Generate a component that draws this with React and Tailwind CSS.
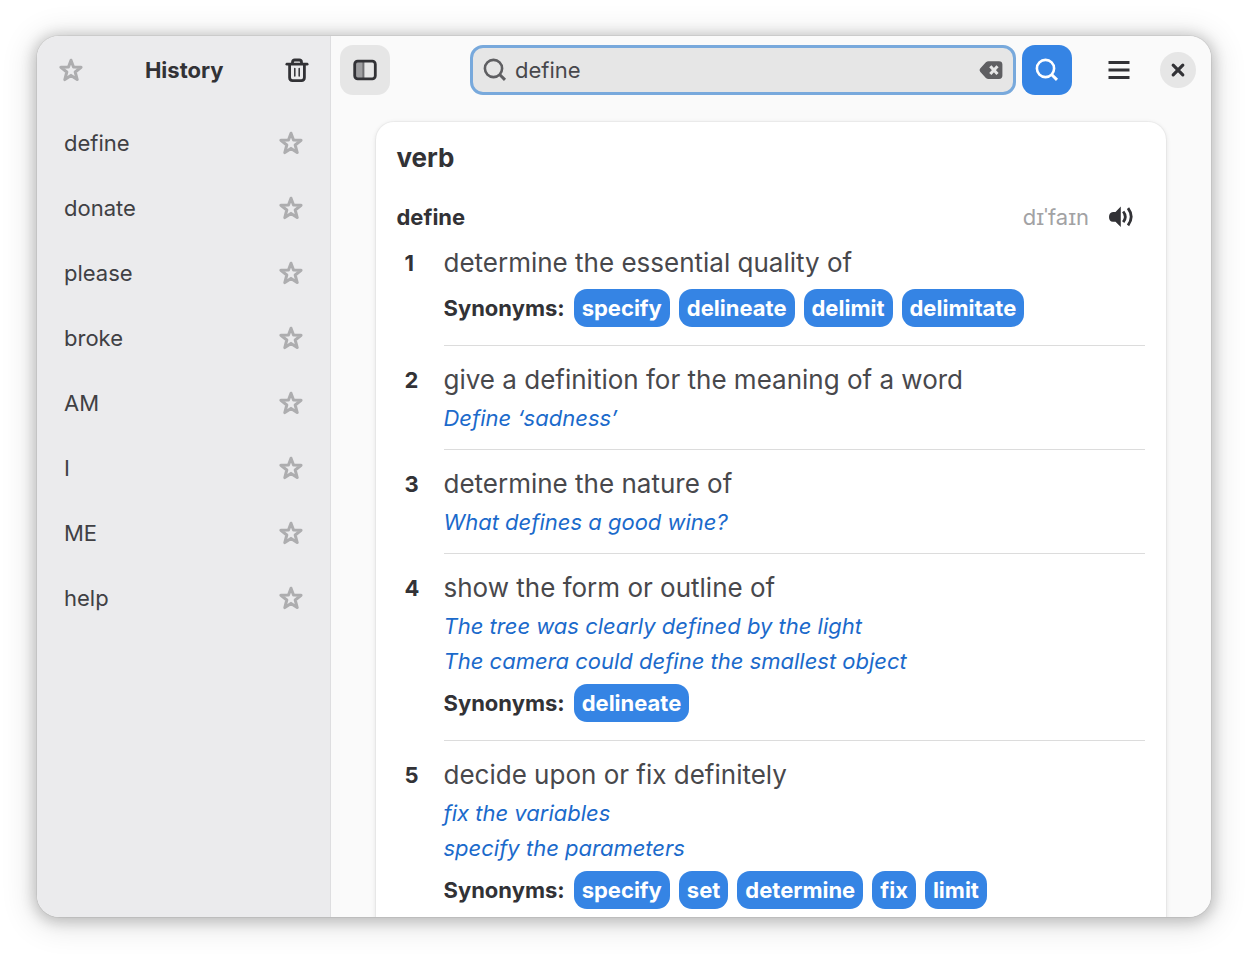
import React, { useState } from 'react';

const HISTORY = ['define', 'donate', 'please', 'broke', 'AM', 'I', 'ME', 'help'];

const DEFINITIONS = [
  {
    text: 'determine the essential quality of',
    examples: [],
    synonyms: ['specify', 'delineate', 'delimit', 'delimitate'],
  },
  {
    text: 'give a definition for the meaning of a word',
    examples: ['Define ‘sadness’'],
    synonyms: [],
  },
  {
    text: 'determine the nature of',
    examples: ['What defines a good wine?'],
    synonyms: [],
  },
  {
    text: 'show the form or outline of',
    examples: ['The tree was clearly defined by the light', 'The camera could define the smallest object'],
    synonyms: ['delineate'],
  },
  {
    text: 'decide upon or fix definitely',
    examples: ['fix the variables', 'specify the parameters'],
    synonyms: ['specify', 'set', 'determine', 'fix', 'limit'],
  },
];

function StarIcon() {
  return (
    <svg viewBox="0 0 24 24" className="size-6" fill="none" stroke="currentColor" strokeWidth="3" strokeLinejoin="round">
      <path d="M12 2.2l2.5 6.8 7.600.3-5.900 4.700 2 7.600-6.200-4.200-6.200 4.200 2-7.600-5.900-4.700 7.600-.3z" />
    </svg>
  );
}

function TrashIcon() {
  return (
    <svg viewBox="0 0 24 24" className="size-6" fill="none" stroke="currentColor" strokeLinecap="round" strokeLinejoin="round">
      <path d="M1.900 6.200h20.200" strokeWidth="2.8" />
      <path d="M7.500 5.500V4.200q0-2.200 2.200-2.200h4.600q2.200 0 2.200 2.200v1.300" strokeWidth="2.8" />
      <path d="M4.600 7v12.600q0 3 3 3h8.800q3 0 3-3V7" strokeWidth="2.8" />
      <path d="M9.800 10.500v7.500M14.200 10.500v7.500" strokeWidth="1.5" />
    </svg>
  );
}

function SidebarIcon() {
  return (
    <svg viewBox="0 0 24 24" className="size-6">
      <path d="M3 4h7v16H3z" fill="currentColor" opacity=".4" />
      <path d="M10.500 4v16" stroke="currentColor" strokeWidth="1.800" opacity=".65" />
      <rect x="1.700" y="3.200" width="20.600" height="17.600" rx="3" fill="none" stroke="currentColor" strokeWidth="2.800" />
    </svg>
  );
}

function SearchIcon() {
  return (
    <svg viewBox="0 0 24 24" className="size-6 shrink-0" fill="none" stroke="currentColor" strokeWidth="2.600">
      <circle cx="10.500" cy="10.500" r="8.600" />
      <path d="M16.600 16.500l5.400 5.400" strokeWidth="3" />
    </svg>
  );
}

function ClearIcon() {
  return (
    <svg viewBox="0 0 24 24" className="size-6">
      <path
        d="M9.500 3.200H20a3.400 3.400 0 0 1 3.400 3.400v11A3.400 3.400 0 0 1 20 21H9.500q-1.500 0-2.600-1.100L1.400 14q-1.600-1.900 0-3.800l5.500-5.900q1.100-1.100 2.600-1.100z"
        fill="currentColor"
      />
      <path d="M11.300 8.200l7.200 7.800M18.500 8.200L11.300 16" stroke="#e6e6e6" strokeWidth="3" />
    </svg>
  );
}

function MenuIcon() {
  return (
    <svg viewBox="0 0 24 24" className="size-6" stroke="currentColor" strokeWidth="3">
      <path d="M1.500 4.500h21M1.500 12h21M1.500 19.500h21" />
    </svg>
  );
}

function CloseIcon() {
  return (
    <svg viewBox="0 0 24 24" className="size-6" stroke="currentColor" strokeWidth="3.200" strokeLinecap="round">
      <path d="M7.200 7.200l9.600 9.600M16.800 7.200l-9.600 9.600" />
    </svg>
  );
}

function SpeakerIcon() {
  return (
    <svg viewBox="0 0 24 24" className="size-6" fill="none" stroke="currentColor" strokeWidth="2.800">
      <path d="M4 7h2.500L11.800 1.500v20.500L6.500 16.800H4Q0 16.500 0 12T4 7z" fill="currentColor" stroke="none" />
      <path d="M14.200 6.500q4.200 5.300 0 10.600" />
      <path d="M19 3.200q6.400 8.600 0 17.200" />
    </svg>
  );
}

function Sidebar({ onSelect }) {
  return (
    <aside className="flex w-1/4 shrink-0 flex-col border-r border-[#dedee0] bg-[#ebebed]">
      <header className="flex h-[68px] items-center justify-between pr-5 pl-[22px]">
        <button aria-label="Favorites" className="text-[#adadaf]"><StarIcon /></button>
        <h1 className="font-bold">History</h1>
        <button aria-label="Clear history"><TrashIcon /></button>
      </header>
      <ul className="pt-1.5">
        {HISTORY.map((word) => (
          <li key={word} className="flex h-[65px] items-center justify-between px-[27px]">
            <button className="text-[#404044]" onClick={() => onSelect(word)}>{word}</button>
            <button aria-label={`Star ${word}`} className="text-[#adadaf]"><StarIcon /></button>
          </li>
        ))}
      </ul>
    </aside>
  );
}

function Toolbar({ query, setQuery }) {
  return (
    <header className="flex h-[68px] shrink-0 items-center pr-[15px] pl-[9px]">
      <button aria-label="Toggle sidebar" className="flex size-[50px] items-center justify-center rounded-[13px] bg-[#e6e6e6]">
        <SidebarIcon />
      </button>
      <form className="flex flex-1 justify-end gap-1.5" onSubmit={(e) => e.preventDefault()}>
        <label className="flex h-[50px] w-full max-w-[546px] items-center gap-2 rounded-[13px] border-3 border-[#78a9dc] bg-[#e6e6e6] px-2.5 text-[#5f5f62]">
          <SearchIcon />
          <input
            type="text"
            aria-label="Search"
            value={query}
            onChange={(e) => setQuery(e.target.value)}
            className="min-w-0 flex-1 bg-transparent text-[#48484c] outline-none"
          />
          <button type="button" aria-label="Clear" onClick={() => setQuery('')}><ClearIcon /></button>
        </label>
        <button aria-label="Search word" className="flex size-[50px] items-center justify-center rounded-[13px] bg-[#3584e4] text-white">
          <SearchIcon />
        </button>
      </form>
      <button aria-label="Menu" className="ml-[22px] flex size-[50px] items-center justify-center"><MenuIcon /></button>
      <button aria-label="Close" className="ml-4 flex size-9 items-center justify-center rounded-full bg-[#e6e6e6]"><CloseIcon /></button>
    </header>
  );
}

function Definition({ number, text, examples, synonyms }) {
  return (
    <li className="flex">
      <span className="w-[47px] shrink-0 pt-[17px] pl-2 leading-[34px] font-bold">{number}</span>
      <div className="flex flex-1 flex-col border-b border-[#dcdcdc] pt-[17px] pb-[13px]">
        <p className="text-[26px] leading-[34px] text-[#48484c]">{text}</p>
        <div className="mt-1 leading-[35px] text-[#1b6acb] italic">
          {examples.map((example) => <p key={example}>{example}</p>)}
        </div>
        {synonyms.length > 0 && (
          <div className="my-[5px] flex flex-wrap items-center gap-[9px] font-bold">
            <span>Synonyms:</span>
            {synonyms.map((word) => (
              <button key={word} className="h-[38px] rounded-[13px] bg-[#3584e4] px-2 font-bold text-white">{word}</button>
            ))}
          </div>
        )}
      </div>
    </li>
  );
}

export default function App() {
  const [query, setQuery] = useState('define');

  return (
    <div className="h-screen bg-white px-[37px] pt-9 pb-[37px] font-[Inter,sans-serif] text-[22px] leading-7 text-[#323236]">
      <div className="flex h-full overflow-hidden rounded-[22px] shadow-[0_0_0_1px_rgba(0,0,0,0.05),0_2px_14px_3px_rgba(0,0,0,0.2),0_4px_30px_8px_rgba(0,0,0,0.1)]">
        <Sidebar onSelect={setQuery} />
        <main className="flex min-w-0 flex-1 flex-col bg-[#fafafa]">
          <Toolbar query={query} setQuery={setQuery} />
          <div className="min-h-0 flex-1 overflow-hidden px-[45px] pt-[18px]">
            <section className="rounded-[18px] bg-white px-[21px] pt-[18px] pb-6 shadow-[0_0_0_1px_rgba(0,0,0,0.03),0_1px_4px_1px_rgba(0,0,0,0.08)]">
              <h2 className="text-[26px] leading-9 font-bold">verb</h2>
              <div className="mt-[23px] flex h-9 items-center">
                <h3 className="flex-1 font-bold">define</h3>
                <span className="mr-5 text-[#a2a2a4]">dɪˈfaɪn</span>
                <button aria-label="Listen to pronunciation" className="mr-3"><SpeakerIcon /></button>
              </div>
              <ol className="-mt-[6px]">
                {DEFINITIONS.map((item, i) => (
                  <Definition key={item.text} number={i + 1} {...item} />
                ))}
              </ol>
            </section>
          </div>
        </main>
      </div>
    </div>
  );
}
